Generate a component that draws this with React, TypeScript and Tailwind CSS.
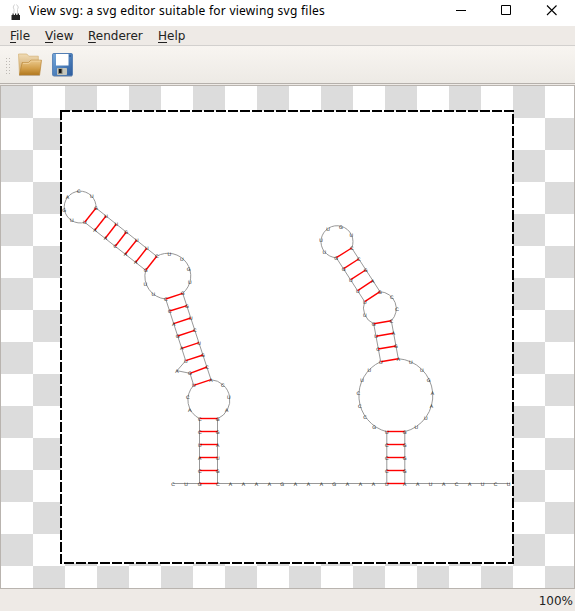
import React from 'react';

type Point = [number, number];
type Strand = { letters: string; points: Point[] };
type Loop = { from: Point; to: Point; r: number; large: 0 | 1 };

const row = (x: number, y: number, count: number): Point[] =>
  Array.from({ length: count }, (_, i): Point => [x + i * 13, y]);

const strands: Strand[] = [
  { letters: 'CU', points: row(173, 483.7, 2) },
  { letters: 'GCAUCC', points: [[199.7, 483.7], [199.7, 470.7], [199.7, 457.7], [199.7, 444.7], [199.7, 431.7], [199.7, 418.7]] },
  { letters: 'ACUGA', points: [[189.7, 410.3], [187.7, 397], [193.7, 385.3], [190, 373.3], [177, 370.7]] },
  { letters: 'UAGACC', points: [[185.7, 360.7], [181.7, 348.3], [177.7, 336], [173.7, 323.7], [169.7, 311], [165.7, 299]] },
  { letters: 'UU', points: [[153.3, 294], [145.3, 283.7]] },
  { letters: 'GAACAAU', points: [[145.7, 270.3], [135.7, 262.3], [125.3, 254.3], [115.3, 246.3], [105.3, 238.3], [95, 230], [84.7, 222.3]] },
  { letters: 'UGACU', points: [[71.7, 220.3], [64.3, 209.7], [67.3, 197.3], [78.7, 191], [91.7, 195.7]] },
  { letters: 'GUUGUUC', points: [[96, 208], [106, 216], [116.3, 224], [126.3, 232], [136.7, 240], [146.7, 248.3], [156.7, 256.3]] },
  { letters: 'UUGU', points: [[169.3, 253.7], [181.7, 258.7], [188.7, 269.3], [189.7, 282.3]] },
  { letters: 'GGUCUGCA', points: [[182.7, 293.3], [187, 305.7], [190.7, 318], [194.7, 330.3], [199, 342.7], [203, 355], [207, 367], [211, 379.7]] },
  { letters: 'CUA', points: [[222.7, 385.3], [228.7, 397], [226.7, 410.3]] },
  { letters: 'GGAUGC', points: [[217.7, 418.7], [217.7, 431.7], [217.7, 444.7], [217.7, 457.7], [217.7, 470.7], [217.7, 483.7]] },
  { letters: 'AAAAGAAAGAAA', points: row(230.3, 483.7, 12) },
  { letters: 'UCCCU', points: [[386.7, 483.7], [386.7, 470.7], [386.7, 457.7], [386.7, 444.7], [386.7, 431.7]] },
  { letters: 'GCCCUU', points: [[374.3, 426.7], [365, 417.3], [359.7, 405.7], [358.3, 393], [362, 380.3], [369.3, 370]] },
  { letters: 'UCUG', points: [[380.7, 361.7], [378, 349], [376, 336.3], [373.7, 323.7]] },
  { letters: 'U', points: [[364.7, 314.7]] },
  { letters: 'UUUGG', points: [[364.7, 301.7], [357.7, 290.7], [350.7, 279.7], [343.7, 268.7], [336.3, 257.7]] },
  { letters: 'UUUGU', points: [[324.3, 252.3], [321, 239.7], [328, 229], [341, 227], [351.3, 235]] },
  { letters: 'CCGAG', points: [[351.7, 248], [358.7, 259], [365.7, 270], [372.7, 280.7], [380, 291.7]] },
  { letters: 'CC', points: [[391.7, 296.7], [397, 309]] },
  { letters: 'CAGA', points: [[391.3, 320.7], [393.3, 333.3], [396, 346], [398.3, 358.7]] },
  { letters: 'UUGAAUU', points: [[410.7, 361.7], [421.7, 369.7], [428.7, 380.3], [432.3, 393], [431.3, 406], [425.7, 417.7], [416.3, 426.7]] },
  { letters: 'GGGGA', points: [[404.7, 431.7], [404.7, 444.7], [404.7, 457.7], [404.7, 470.7], [404.7, 483.7]] },
  { letters: 'AUACAUCU', points: row(417.6, 483.7, 8) },
];

// Base pairs, listed as [x1, y1, x2, y2].
const pairs: [number, number, number, number][] = [
  ...[483.5, 470.5, 457.5, 444.5, 431.5, 418.5].map((y): [number, number, number, number] => [199.7, y, 217.7, y]),
  ...[483.5, 470.5, 457.5, 444.5, 431.5].map((y): [number, number, number, number] => [386.7, y, 404.7, y]),
  [193.7, 385.3, 211, 379.7], [190, 373.3, 207, 367], [185.7, 360.7, 203, 355],
  [181.7, 348.3, 199, 342.7], [177.7, 336, 194.7, 330.3], [173.7, 323.7, 190.7, 318],
  [169.7, 311, 187, 305.7], [165.7, 299, 182.7, 293.3],
  [145.7, 270.3, 156.7, 256.3], [135.7, 262.3, 146.7, 248.3], [125.3, 254.3, 136.7, 240],
  [115.3, 246.3, 126.3, 232], [105.3, 238.3, 116.3, 224], [95, 230, 106, 216], [84.7, 222.3, 96, 208],
  [380.7, 361.7, 398.3, 358.7], [378, 349, 396, 346], [376, 336.3, 393.3, 333.3], [373.7, 323.7, 391.3, 320.7],
  [364.7, 301.7, 380, 291.7], [357.7, 290.7, 372.7, 280.7], [350.7, 279.7, 365.7, 270],
  [343.7, 268.7, 358.7, 259], [336.3, 257.7, 351.7, 248],
];

const backbone = [
  'M173 483.5H510', 'M199.5 483.7V418.7', 'M217.5 483.7V418.7',
  'M193.7 385.3L190 373.3L177 370.7L185.7 360.7L165.7 299',
  'M182.7 293.3L211 379.7', 'M145.7 270.3L84.7 222.3', 'M96 208L156.7 256.3',
  'M386.8 483.7V431.7', 'M404.8 483.7V431.7', 'M380.7 361.7L373.7 323.7',
  'M391.3 320.7L398.3 358.7', 'M364.7 301.7L336.3 257.7', 'M351.7 248L380 291.7',
].join('');

const loops: Loop[] = [
  { from: [199.7, 418.7], to: [193.7, 385.3], r: 21, large: 0 },
  { from: [211, 379.7], to: [217.7, 418.7], r: 20.4, large: 0 },
  { from: [165.7, 299], to: [145.7, 270.3], r: 22.7, large: 0 },
  { from: [156.7, 256.3], to: [182.7, 293.3], r: 22.7, large: 0 },
  { from: [84.7, 222.3], to: [96, 208], r: 15.9, large: 1 },
  { from: [386.7, 431.7], to: [380.7, 361.7], r: 37.3, large: 0 },
  { from: [398.3, 358.7], to: [404.7, 431.7], r: 37.1, large: 0 },
  { from: [373.7, 323.7], to: [364.7, 301.7], r: 17, large: 0 },
  { from: [380, 291.7], to: [391.3, 320.7], r: 17, large: 0 },
  { from: [336.3, 257.7], to: [351.7, 248], r: 16, large: 1 },
];

function Structure() {
  return (
    <svg viewBox="1 86 573 502" className="block h-[502px] w-[573px]">
      <rect x="61" y="111" width="452" height="452" fill="#fff" />
      <g stroke="#000" strokeWidth="2" strokeDasharray="10 2">
        <path d="M60 111H514" />
        <path d="M513 114V564" />
        <path d="M64 563H514" />
        <path d="M61 110V564" />
      </g>
      <g fill="none" stroke="#8c8c8c" strokeWidth="0.9">
        <path d={backbone} />
        {loops.map((l, i) => (
          <path key={i} d={`M${l.from[0]} ${l.from[1]}A${l.r} ${l.r} 0 ${l.large} 1 ${l.to[0]} ${l.to[1]}`} />
        ))}
      </g>
      <g stroke="#f00" strokeWidth="1.4">
        {pairs.map(([x1, y1, x2, y2], i) => (
          <line key={i} x1={x1} y1={y1} x2={x2} y2={y2} />
        ))}
      </g>
      <g
        fill="#222"
        textAnchor="middle"
        textRendering="geometricPrecision"
        className="font-['Liberation_Sans',sans-serif] text-[5px] opacity-[0.99]"
      >
        {strands.flatMap((s, i) =>
          s.points.map(([x, y], j) => (
            <text key={`${i}-${j}`} x={x} y={y + 1.8}>{s.letters[j]}</text>
          )),
        )}
      </g>
    </svg>
  );
}

function AppIcon() {
  return (
    <svg viewBox="0 0 12 18" className="-mt-[3px] h-[18px] w-3">
      <path d="M4 10V6.500L3.200 4 4.500 1.500M7.500 10V6.500L8.300 4 6.500 1.500" fill="none" stroke="#ccc" strokeWidth="0.9" />
      <path d="M2.500 12V10.500h1.200V12H5V10.500h1.200V12H7.500V10.500H9V12h1v5H1.500v-5Z" fill="#222" />
    </svg>
  );
}

function FolderIcon() {
  return (
    <svg viewBox="0 0 24 24" className="size-6">
      <defs>
        <linearGradient id="back" x2="0" y2="1"><stop stopColor="#f0dbb5" /><stop offset="1" stopColor="#c79b55" /></linearGradient>
        <linearGradient id="front" x2="0" y2="1"><stop stopColor="#eac88c" /><stop offset="0.55" stopColor="#d3a04c" /><stop offset="1" stopColor="#b1781f" /></linearGradient>
      </defs>
      <path d="M1 22.500h21" stroke="#aaa" strokeOpacity="0.6" />
      <path d="M.5 1h8.300l2 2.200h9.500V18L1.500 22Z" fill="url(#back)" stroke="#d4b176" strokeWidth="0.7" />
      <path d="M4.200 9.500h6.300l2.500-2.300h10.500L21.600 22H1.400Z" fill="url(#front)" stroke="#b98537" strokeWidth="0.7" />
      <path d="M5 10.300h5.900l2.500-2.300h9" fill="none" stroke="#f6dcae" strokeWidth="0.7" />
    </svg>
  );
}

function SaveIcon() {
  return (
    <svg viewBox="0 0 21 24" className="h-6 w-[21px]">
      <defs>
        <linearGradient id="disk" x2="1" y2="1"><stop stopColor="#79aadb" /><stop offset="0.5" stopColor="#4f82bd" /><stop offset="1" stopColor="#2d5b9c" /></linearGradient>
      </defs>
      <path d="M2 23.300h18" stroke="#999" strokeOpacity="0.5" />
      <rect x="0.600" y="0.500" width="19.800" height="22.300" rx="1" fill="url(#disk)" stroke="#3c6ca8" strokeWidth="0.8" />
      <rect x="4" y="1" width="12.500" height="11.500" fill="#fff" />
      <rect x="5" y="15" width="10" height="7" rx="0.800" fill="#c5c6bc" />
      <rect x="6" y="15.500" width="4.500" height="5.500" fill="#85857a" />
      <rect x="7" y="16" width="2.500" height="4" fill="#151515" />
      <path d="M17.300 2h1.500v2h-1.500Z" fill="#315f9b" />
    </svg>
  );
}

function Menu({ label, className }: { label: string; className: string }) {
  return (
    <span className={className}>
      <span className="underline decoration-1 underline-offset-2">{label[0]}</span>{label.slice(1)}
    </span>
  );
}

export default function App() {
  return (
    <div className="flex h-[611px] w-[575px] flex-col overflow-hidden bg-[#eeeae6] font-['DejaVu_Sans',sans-serif] text-xs text-[#222]">
      <header className="flex h-[26px] items-center bg-white pl-[10px] text-black">
        <AppIcon />
        <h1 className="-mt-1 ml-[7px] w-[310px] whitespace-nowrap font-['Noto_Sans',sans-serif] text-xs leading-[22px] tracking-[0.255px]">View svg: a svg editor suitable for viewing svg files</h1>
        <svg viewBox="0 0 103 12" className="-mt-[6px] ml-auto mr-[17px] h-3 w-[103px]" fill="none" stroke="#000">
          <path d="M1 6.500h10" />
          <path d="M46.500 1.500h9v9h-9Z" />
          <path d="M92 1.500l9.500 9.500M101.500 1.500L92 11" strokeWidth="1.1" />
        </svg>
      </header>
      <nav className="flex h-5 border-b border-[#d2d0ce] pl-[10px] leading-[21px]">
        <Menu label="File" className="w-[35px]" />
        <Menu label="View" className="w-[43px]" />
        <Menu label="Renderer" className="w-[70px]" />
        <Menu label="Help" className="w-[35px]" />
      </nav>
      <div className="flex h-[38px] items-start border-b border-[#b5b0ab] bg-linear-to-b from-[#f8f5f1] to-[#edeae5] pl-[5px]">
        <div className="mt-[11px] h-[17px] w-[5px] bg-[radial-gradient(circle,#bdb9b4_0.65px,transparent_0.8px)] bg-[size:3px_3px]" />
        <div className="ml-[8px] mt-[7px]"><FolderIcon /></div>
        <div className="ml-[10px] mt-[7px]"><SaveIcon /></div>
      </div>
      <main className="mt-px h-[504px] border border-[#b9b4af] bg-[conic-gradient(#fff_25%,#dcdcdc_0_50%,#fff_0_75%,#dcdcdc_0)] bg-[size:64px_64px]">
        <Structure />
      </main>
      <footer className="flex h-[22px] items-center justify-end pr-[2px] pt-[2px] leading-[22px]">100%</footer>
    </div>
  );
}
